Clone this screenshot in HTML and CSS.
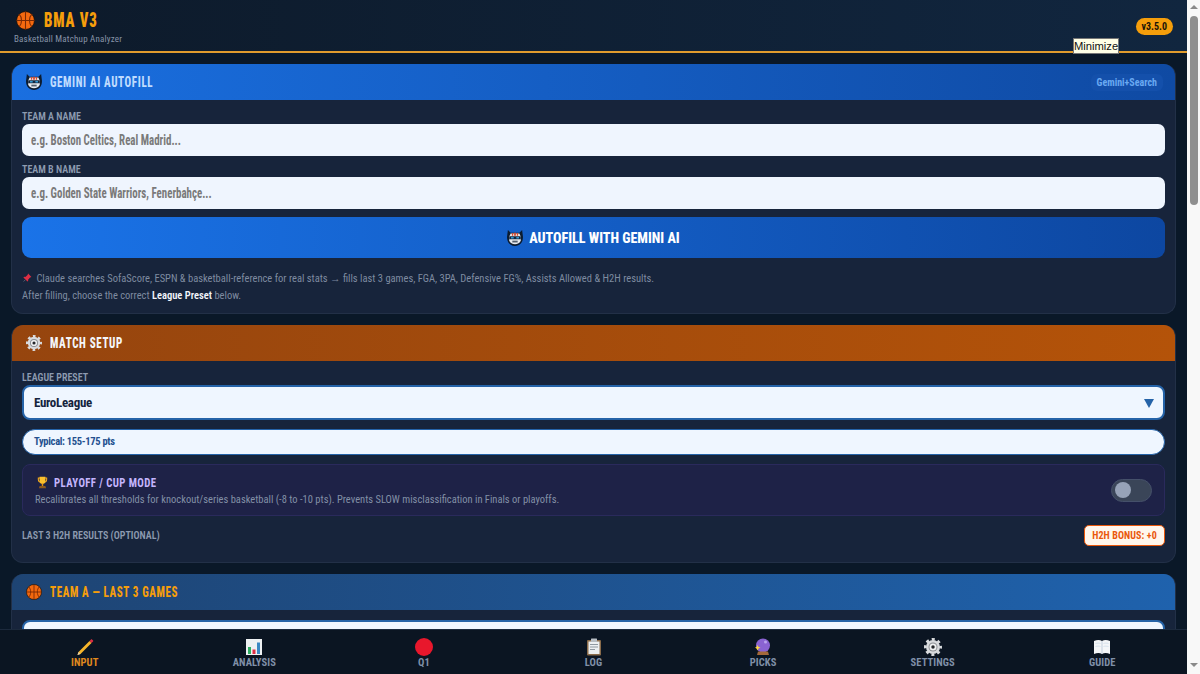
FILE: index.html
```html
<!DOCTYPE html>
<html lang="en">
<head>
    <meta charset="UTF-8">
    <title>BMA V3</title>
    <link rel="stylesheet" href="styles.css">
</head>
<body>
    <svg class="defs" width="0" height="0">
        <symbol id="i-ball" viewBox="0 0 36 36">
            <circle cx="18" cy="18" r="17" fill="#f4690f" stroke="#1a1008" stroke-width="1.5"/>
            <path d="M18 1v34M1 18h34M6 6c6 6 6 18 0 24M30 6c-6 6-6 18 0 24" fill="none" stroke="#7a2a05" stroke-width="2"/>
        </symbol>
        <symbol id="i-robot" viewBox="0 0 36 36">
            <path d="M2 0l6 6h20l6-6 2 16c0 12-7 20-18 20S0 28 0 16z" fill="#0c1c30"/>
            <path d="M8 8h20l3 7v9c-2 5-7 8-13 8S7 29 5 24v-9z" fill="#e6e9ee"/>
            <path d="M16 6h4v7h-4zM11 7h3v6h-3zM22 7h3v6h-3z" fill="#d8492f"/>
            <rect x="5" y="14" width="26" height="7" rx="1" fill="#12263f"/>
            <rect x="9" y="16" width="6" height="3" fill="#35a7e8"/>
            <rect x="21" y="16" width="6" height="3" fill="#35a7e8"/>
            <rect x="12" y="24" width="12" height="4" fill="#55606e"/>
        </symbol>
        <symbol id="i-gear" viewBox="0 0 36 36">
            <circle cx="18" cy="18" r="14" fill="#d9dbde"/>
            <circle cx="18" cy="18" r="15.5" fill="none" stroke="#d9dbde" stroke-width="5" stroke-dasharray="6.1 6.07" stroke-dashoffset="3"/>
            <circle cx="18" cy="18" r="9" fill="#8a8d91"/>
            <circle cx="18" cy="18" r="7" fill="#f0f1f2"/>
            <circle cx="18" cy="18" r="3.5" fill="#23262a"/>
        </symbol>
        <symbol id="i-pin" viewBox="0 0 36 36">
            <path d="M22 2l12 12-5 2-7 8c1 3 0 5-2 7L5 16c2-2 4-3 7-2l8-7z" fill="#dd2e44"/>
            <path d="M11 24L2 34l10-9z" fill="#99aab5"/>
        </symbol>
        <symbol id="i-trophy" viewBox="0 0 36 36">
            <path d="M5 4h26v6c0 6-4 9-8 9H13c-4 0-8-3-8-9zm3 3v3c0 3 2 5 4 6V7zm20 0h-4v9c2-1 4-3 4-6z" fill="#f2a81d"/>
            <path d="M10 2h16v11c0 6-3 9-8 9s-8-3-8-9z" fill="#fbc02d"/>
            <rect x="16" y="21" width="4" height="7" fill="#e08e0b"/>
            <path d="M10 28h16l2 6H8z" fill="#8d5a1c"/>
        </symbol>
        <symbol id="i-pencil" viewBox="0 0 36 36">
            <path d="M27 6l4 4L9 32l-6 2 2-6z" fill="#f7b52b"/>
            <path d="M27 6l3-3c1-1 3 1 4 2s0 2 0 2l-3 3z" fill="#dd2e44"/>
            <path d="M5 28l4 4-6 2z" fill="#e8d3ae"/>
        </symbol>
        <symbol id="i-chart" viewBox="0 0 36 36">
            <rect x="2" y="2" width="32" height="32" fill="#eef1f3"/>
            <rect x="6" y="18" width="6" height="14" fill="#2fae62"/>
            <rect x="15" y="23" width="6" height="9" fill="#dd2e44"/>
            <rect x="24" y="9" width="6" height="23" fill="#3b88c3"/>
        </symbol>
        <symbol id="i-clip" viewBox="0 0 36 36">
            <rect x="4" y="4" width="28" height="31" rx="2" fill="#8a6b4a"/>
            <rect x="7" y="7" width="22" height="25" fill="#eceff1"/>
            <rect x="12" y="1" width="12" height="7" rx="1" fill="#b8bec4"/>
            <path d="M10 13h16M10 18h16M10 23h10" stroke="#8f98a0" stroke-width="2"/>
        </symbol>
        <symbol id="i-orb" viewBox="0 0 36 36">
            <circle cx="18" cy="15" r="14" fill="#8a63d2"/>
            <circle cx="23" cy="8" r="3" fill="#b9a3ee"/>
            <path d="M8 27h20l2 7H6z" fill="#a5693a"/>
            <path d="M7 14l2 4 4 1-4 2-2 4-2-4-3-2 3-1z" fill="#fcd53f"/>
        </symbol>
        <symbol id="i-book" viewBox="0 0 36 36">
            <path d="M2 6c6-3 12-3 16 0 4-3 10-3 16 0v26c-6-3-12-3-16 0-4-3-10-3-16 0z" fill="#f4f6f8"/>
            <path d="M18 6v26" stroke="#b4c4d4" stroke-width="1.5"/>
            <path d="M5 11c4-1 7-1 10 0M5 17c4-1 7-1 10 0M21 11c3-1 6-1 10 0M21 17c3-1 6-1 10 0" stroke="#d5e1ec" stroke-width="2" fill="none"/>
        </symbol>
    </svg>

    <div class="window">
        <div class="page">
            <header class="topbar">
                <div>
                    <div class="brand">
                        <svg class="brand-icon"><use href="#i-ball"/></svg>
                        <span class="brand-name">BMA V3</span>
                    </div>
                    <div class="brand-sub">Basketball Matchup Analyzer</div>
                </div>
                <span class="version">v3.5.0</span>
            </header>

            <main class="content">
                <section class="card">
                    <div class="card-head head-blue">
                        <svg class="head-icon"><use href="#i-robot"/></svg>
                        <h2 class="head-title title-sky">GEMINI AI AUTOFILL</h2>
                        <span class="head-tag">Gemini+Search</span>
                    </div>
                    <div class="card-body">
                        <label class="field-label">TEAM A NAME</label>
                        <div class="text-field"><input class="text-input" type="text" placeholder="e.g. Boston Celtics, Real Madrid..."></div>
                        <label class="field-label label-next">TEAM B NAME</label>
                        <div class="text-field"><input class="text-input" type="text" placeholder="e.g. Golden State Warriors, Fenerbahçe..."></div>
                        <button class="autofill-btn">
                            <svg class="btn-icon"><use href="#i-robot"/></svg>
                            AUTOFILL WITH GEMINI AI
                        </button>
                        <p class="note">
                            <svg class="note-icon"><use href="#i-pin"/></svg>
                            Claude searches SofaScore, ESPN &amp; basketball-reference for real stats → fills last 3 games, FGA, 3PA, Defensive FG%, Assists Allowed &amp; H2H results.<br>
                            After filling, choose the correct <strong>League Preset</strong> below.
                        </p>
                    </div>
                </section>

                <section class="card">
                    <div class="card-head head-orange">
                        <svg class="head-icon"><use href="#i-gear"/></svg>
                        <h2 class="head-title">MATCH SETUP</h2>
                    </div>
                    <div class="card-body">
                        <label class="field-label">LEAGUE PRESET</label>
                        <div class="select-wrap">
                            <select class="league-select"><option>EuroLeague</option></select>
                        </div>
                        <div class="typical">Typical: 155-175 pts</div>
                        <div class="playoff">
                            <div>
                                <div class="playoff-title">
                                    <svg class="trophy"><use href="#i-trophy"/></svg>
                                    <span class="playoff-name">PLAYOFF / CUP MODE</span>
                                </div>
                                <div class="playoff-text">Recalibrates all thresholds for knockout/series basketball (-8 to -10 pts). Prevents SLOW misclassification in Finals or playoffs.</div>
                            </div>
                            <span class="toggle"><span class="toggle-knob"></span></span>
                        </div>
                        <div class="h2h-row">
                            <span class="field-label">LAST 3 H2H RESULTS (OPTIONAL)</span>
                            <span class="h2h-badge">H2H BONUS: +0</span>
                        </div>
                    </div>
                </section>

                <section class="card">
                    <div class="card-head head-navy">
                        <svg class="head-icon"><use href="#i-ball"/></svg>
                        <h2 class="head-title title-amber">TEAM A — LAST 3 GAMES</h2>
                    </div>
                    <div class="card-body">
                        <div class="select-wrap plain"><div class="league-select"></div></div>
                    </div>
                </section>
            </main>

            <nav class="tabs">
                <a class="tab active"><svg class="tab-icon"><use href="#i-pencil"/></svg>INPUT</a>
                <a class="tab"><svg class="tab-icon"><use href="#i-chart"/></svg>ANALYSIS</a>
                <a class="tab"><span class="tab-dot"></span>Q1</a>
                <a class="tab"><svg class="tab-icon"><use href="#i-clip"/></svg>LOG</a>
                <a class="tab"><svg class="tab-icon"><use href="#i-orb"/></svg>PICKS</a>
                <a class="tab"><svg class="tab-icon"><use href="#i-gear"/></svg>SETTINGS</a>
                <a class="tab"><svg class="tab-icon"><use href="#i-book"/></svg>GUIDE</a>
            </nav>
        </div>

        <div class="scrollbar">
            <span class="arrow-up"></span>
            <span class="thumb"></span>
            <span class="arrow-down"></span>
        </div>
    </div>

    <div class="tooltip">Minimize</div>
</body>
</html>
```
FILE: styles.css
```css
* { box-sizing: border-box; }
html, body { margin: 0; height: 100%; overflow: hidden; }
body { font-family: Roboto, "Noto Sans", sans-serif; font-stretch: 75%; background: #0b1a2b; color: #8d9bb0; }
.defs { position: absolute; }

/* bold labels and headings */
.brand-name, .version, .head-title, .head-tag, .field-label, .text-input, .autofill-btn,
.league-select, .typical, .playoff-name, .h2h-badge, .tab { font-family: Roboto, sans-serif; font-stretch: 75%; font-weight: 700; }

/* display type is narrower than Roboto Condensed */
.brand-name, .head-title, .playoff-name { transform-origin: left center; }

.window { display: flex; height: 674px; }
.page { flex: 1; min-width: 0; display: flex; flex-direction: column; background: #0a1828; }

/* header */
.topbar { height: 53px; flex: none; display: flex; justify-content: space-between; align-items: center; padding: 0 14px; background: linear-gradient(90deg, #0d1a2a, #11263f); border-bottom: 2px solid #e09b2d; }
.brand { display: flex; align-items: center; gap: 9px; padding-left: 2px; height: 26px; }
.brand-icon { width: 19px; height: 19px; }
.brand-name { font-size: 20px; font-weight: 900; letter-spacing: 1.2px; color: #f59e0b; transform: scaleX(0.74); }
.brand-sub { font-size: 9px; letter-spacing: 0.2px; color: #8794a8; margin-top: 1px; }
.version { font-size: 10px; color: #1a1408; background: #f59e0b; border-radius: 9px; padding: 3px 6px; position: relative; top: 1px; }

/* cards */
.content { flex: 1; min-height: 0; overflow: hidden; padding: 11px 11px 0; display: flex; flex-direction: column; gap: 11px; }
.card { flex: none; background: #17243b; border: 1px solid #223047; border-top: none; border-radius: 12px; overflow: hidden; }
.card-head { height: 36px; display: flex; align-items: center; padding: 0 12px 0 14px; gap: 8px; }
.head-blue { background: linear-gradient(90deg, #1a6fe0, #0f4aa3); }
.head-orange { background: linear-gradient(90deg, #96450e, #b45309); }
.head-navy { background: linear-gradient(90deg, #1e4473, #1f62ad); }
.head-icon { width: 16px; height: 16px; flex: none; }
.head-title { margin: 0; flex: 1; font-size: 14px; font-weight: 800; letter-spacing: 0.8px; color: #f4f6fa; transform: scaleX(0.786); }
.title-sky { color: #bfdbfe; }
.title-amber { color: #f59e0b; }
.head-tag { font-size: 10px; color: #6aa9f2; background: #1450ab; border-radius: 6px; padding: 3px 6px; }
.card-body { padding: 10px 10px 9px; }

/* fields */
.field-label { display: block; font-size: 10px; font-weight: 600; color: #8d9bb0; line-height: 14px; }
.label-next { margin-top: 7px; }
.text-field { height: 32px; border-radius: 7px; background: #eff5fe; padding-left: 9px; overflow: hidden; }
.text-input { display: block; width: 130%; height: 32px; border: none; outline: none; background: none; padding: 0; font-size: 14px; color: #1a2a44; transform: scaleX(0.78); transform-origin: left center; }
.text-input::placeholder { color: #7a7a7a; opacity: 1; }
.autofill-btn { display: flex; align-items: center; justify-content: center; gap: 6px; width: 100%; height: 41px; margin-top: 8px; border: none; border-radius: 9px; background: linear-gradient(90deg, #1a73e8, #0d47a1); font-size: 14px; font-weight: 800; color: #fff; }
.btn-icon { width: 16px; height: 16px; }
.note { margin: 12px 0 0; font-size: 10.5px; line-height: 17px; color: #7e8ba0; }
.note strong { color: #f2f5fa; font-weight: 600; }
.note-icon { width: 10px; height: 10px; vertical-align: -1px; margin-right: 2px; }

.select-wrap { position: relative; }
.select-wrap::after { content: ""; position: absolute; right: 11px; top: 14px; border-left: 5px solid transparent; border-right: 5px solid transparent; border-top: 9px solid #2563a8; }
.select-wrap.plain::after { display: none; }
.league-select { display: block; width: 100%; height: 35px; appearance: none; border: 2px solid #2563a8; border-radius: 8px; background: #eff6ff; padding: 0 10px; font-size: 13px; letter-spacing: -0.3px; color: #14233d; }
.typical { height: 26px; margin-top: 9px; border: 1px solid #2563a8; border-radius: 13px; background: #eff6ff; padding: 0 11px; line-height: 24px; font-size: 10.5px; letter-spacing: -0.3px; color: #24508f; }

.playoff { height: 52px; margin-top: 9px; display: flex; justify-content: space-between; align-items: center; padding: 0 12px 0 13px; background: #1e2247; border: 1px solid #2a2a5c; border-radius: 8px; }
.playoff-title { display: flex; align-items: center; gap: 5px; }
.playoff-name { font-size: 13.5px; letter-spacing: 0.5px; color: #c4b5fd; transform: scaleX(0.8); }
.trophy { width: 13px; height: 13px; }
.playoff-text { font-size: 10.5px; color: #8290a6; margin-top: 3px; margin-left: -1px; }
.toggle { width: 41px; height: 23px; flex: none; background: #3a4558; border: 1px solid #45506a; border-radius: 12px; display: flex; align-items: center; padding-left: 3px; }
.toggle-knob { width: 16px; height: 16px; border-radius: 50%; background: #97a3b8; }

.h2h-row { display: flex; justify-content: space-between; align-items: center; margin-top: 9px; margin-bottom: 7px; }
.h2h-badge { height: 21px; width: 81px; text-align: center; font-size: 10px; letter-spacing: 0.1px; line-height: 19px; white-space: nowrap; color: #ea580c; background: #fff7ed; border: 1px solid #ea580c; border-radius: 5px; }

/* bottom tabs */
.tabs { height: 45px; flex: none; display: flex; background: #0b1522; border-top: 1px solid #1c2a3d; }
.tab { flex: 1; display: flex; flex-direction: column; align-items: center; padding-top: 8px; font-size: 10.5px; letter-spacing: 0.1px; color: #8090a8; line-height: 13px; }
.tab.active { color: #e08a1e; }
.tab-icon { width: 18px; height: 18px; }
.tab-dot { width: 18px; height: 18px; border-radius: 50%; background: #e8172c; }

/* window chrome */
.scrollbar { width: 13px; flex: none; background: #f8f8f8; display: flex; flex-direction: column; align-items: center; padding: 5px 0; }
.arrow-up { border-left: 4px solid transparent; border-right: 4px solid transparent; border-bottom: 4px solid #8a8a8a; }
.thumb { width: 8px; height: 189px; margin-top: 7px; border-radius: 4px; background: #8f8f8f; }
.arrow-down { margin-top: auto; margin-bottom: 2px; border-left: 4px solid transparent; border-right: 4px solid transparent; border-top: 4px solid #8a8a8a; }
.tooltip { position: absolute; left: 1073px; top: 38px; width: 46px; height: 16px; background: #ffffe6; border: 1px solid #767676; font-family: "Liberation Sans", sans-serif; font-stretch: normal; font-size: 11.2px; line-height: 14px; text-align: center; color: #111; }
```
